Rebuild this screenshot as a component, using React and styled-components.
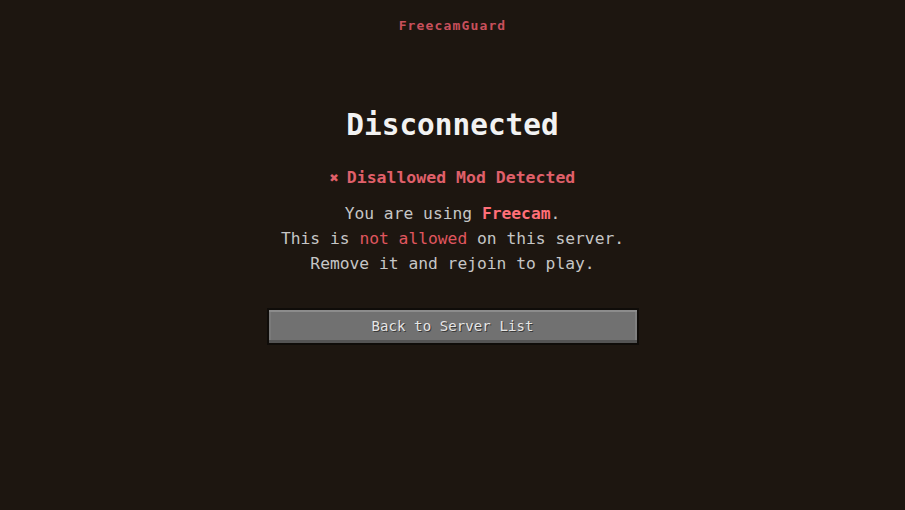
import React from "react";
import styled, { createGlobalStyle } from "styled-components";

const Global = createGlobalStyle`
  html, body {
    margin: 0;
    padding: 0;
    background: #1d1610;
  }
  body {
    font-family: "DejaVu Sans Mono", "Liberation Mono", monospace;
  }
`;

const Screen = styled.div`
  width: 905px;
  height: 510px;
  background: #1d1610;
  display: flex;
  flex-direction: column;
  align-items: center;
  padding-top: 18px;
  box-sizing: border-box;
`;

const Brand = styled.div`
  font-size: 13px;
  line-height: 16px;
  font-weight: bold;
  letter-spacing: 1.15px;
  color: #c8505c;
`;

const Title = styled.h1`
  margin: 74px 0 0;
  font-size: 29.4px;
  line-height: 34px;
  font-weight: bold;
  color: #f2f2f2;
`;

const Reason = styled.div`
  margin-top: 26px;
  font-size: 16.5px;
  line-height: 20px;
  font-weight: bold;
  color: #e0606a;
  display: flex;
  align-items: center;
  gap: 8px;
`;

const Cross = styled.span`
  font-size: 15px;
`;

const Message = styled.div`
  margin-top: 13px;
  font-size: 16.3px;
  line-height: 25px;
  color: #c6c6c6;
  text-align: center;
`;

const Hl = styled.span`
  color: ${(p) => (p.$strong ? "#ff6f78" : "#e0565f")};
  font-weight: ${(p) => (p.$strong ? "bold" : "normal")};
`;

const Button = styled.button`
  margin-top: 32px;
  width: 372px;
  height: 37px;
  box-sizing: border-box;
  border: 2px solid #0f0c09;
  background: #717171;
  box-shadow: inset 0 2px 0 #8c8c8c, inset 0 -3px 0 #545454, inset -2px 0 0 #808080, inset 2px 0 0 #7a7a7a;
  font-family: "DejaVu Sans Mono", "Liberation Mono", monospace;
  font-size: 14px;
  color: #e6e6e6;
  text-shadow: 1px 1px 0 #3a3a3a;
  letter-spacing: 0.1px;
  cursor: pointer;
  padding: 0 0 1px;
`;

export default function App() {
  return (
    <>
      <Global />
      <Screen>
        <Brand>FreecamGuard</Brand>
        <Title>Disconnected</Title>
        <Reason>
          <Cross>✖</Cross>
          <span>Disallowed Mod Detected</span>
        </Reason>
        <Message>
          <div>
            You are using <Hl $strong>Freecam</Hl>.
          </div>
          <div>
            This is <Hl>not allowed</Hl> on this server.
          </div>
          <div>Remove it and rejoin to play.</div>
        </Message>
        <Button>Back to Server List</Button>
      </Screen>
    </>
  );
}
